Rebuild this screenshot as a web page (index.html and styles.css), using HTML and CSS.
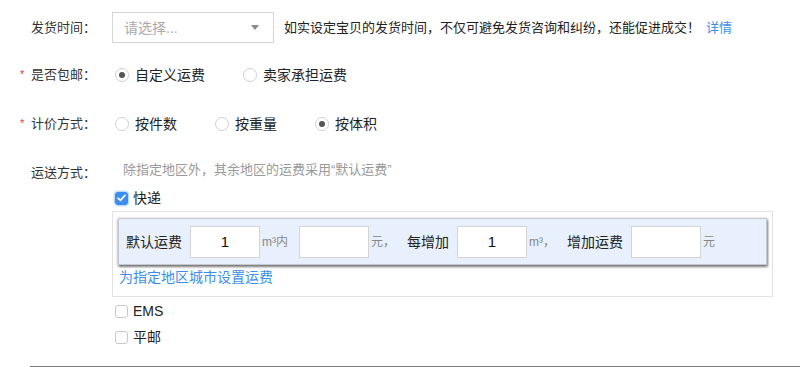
FILE: index.html
```html
<!DOCTYPE html>
<html lang="zh-CN">
<head>
<meta charset="utf-8">
<title>运费设置</title>
<link rel="stylesheet" href="styles.css">
</head>
<body>
<div class="form">
  <div class="row row-time">
    <div class="label">发货时间：</div>
    <div class="select"><span class="placeholder">请选择...</span><span class="caret"></span></div>
    <div class="desc">如实设定宝贝的发货时间，不仅可避免发货咨询和纠纷，还能促进成交！<a class="link detail">详情</a></div>
  </div>

  <div class="row row-free">
    <div class="label"><span class="star">*</span>是否包邮：</div>
    <div class="radios">
      <label class="radio-item"><span class="radio checked"></span>自定义运费</label>
      <label class="radio-item"><span class="radio"></span>卖家承担运费</label>
    </div>
  </div>

  <div class="row row-price">
    <div class="label"><span class="star">*</span>计价方式：</div>
    <div class="radios">
      <label class="radio-item"><span class="radio"></span>按件数</label>
      <label class="radio-item"><span class="radio"></span>按重量</label>
      <label class="radio-item"><span class="radio checked"></span>按体积</label>
    </div>
  </div>

  <div class="row row-ship">
    <div class="label label-top">运送方式：</div>
    <div class="ship">
      <div class="hint">除指定地区外，其余地区的运费采用“默认运费”</div>
      <label class="check-item"><span class="checkbox checked"><svg width="9" height="8" viewBox="0 0 9 8"><path d="M1 4.2 L3.4 6.4 L8 1.4" fill="none" stroke="#fff" stroke-width="1.6" stroke-linecap="round" stroke-linejoin="round"/></svg></span>快递</label>
      <div class="box">
        <div class="bar">
          <span class="bar-text">默认运费</span>
          <span class="input">1</span>
          <span class="unit unit-a">m³内</span>
          <span class="input"></span>
          <span class="unit unit-b">元，</span>
          <span class="bar-text">每增加</span>
          <span class="input">1</span>
          <span class="unit unit-c">m³，</span>
          <span class="bar-text">增加运费</span>
          <span class="input"></span>
          <span class="unit">元</span>
        </div>
        <a class="link area">为指定地区城市设置运费</a>
      </div>
      <label class="check-item ems"><span class="checkbox"></span>EMS</label>
      <label class="check-item post"><span class="checkbox"></span>平邮</label>
    </div>
  </div>
</div>
<div class="rule"></div>
</body>
</html>
```

FILE: styles.css
```css
html, body {
  margin: 0;
  padding: 0;
  background: #fff;
}
body {
  font-family: "Liberation Sans", "Noto Sans CJK SC", sans-serif;
  color: #333;
  width: 800px;
  height: 367px;
  overflow: hidden;
}
.form {
  padding-top: 12px;
}
.row {
  display: flex;
  align-items: center;
  height: 31px;
}
.row-free { margin-top: 16px; }
.row-price { margin-top: 18px; }
.row-ship {
  margin-top: 21px;
  height: auto;
  align-items: flex-start;
}
.label {
  width: 112px;
  box-sizing: border-box;
  padding-left: 31px;
  font-size: 13px;
  line-height: 20px;
  color: #333;
  display: flex;
  align-items: center;
  flex-shrink: 0;
}
.label-top { padding-top: 3px; }
.star {
  color: #e4393c;
  font-size: 11px;
  width: 11px;
  margin-left: -11px;
  line-height: 20px;
  position: relative;
  top: -1px;
}
.select {
  width: 162px;
  height: 31px;
  box-sizing: border-box;
  border: 1px solid #d6d6d6;
  display: flex;
  align-items: center;
  justify-content: space-between;
  padding: 0 14px 0 11px;
  flex-shrink: 0;
}
.placeholder {
  font-size: 14px;
  color: #aaa;
  line-height: 20px;
}
.caret {
  width: 0;
  height: 0;
  border-left: 4px solid transparent;
  border-right: 4px solid transparent;
  border-top: 5px solid #8a8a8a;
}
.desc {
  margin-left: 10px;
  font-size: 13px;
  line-height: 20px;
  white-space: nowrap;
  color: #222;
}
.link {
  color: #3d8ee8;
  cursor: pointer;
}
.detail { margin-left: 6px; }
.radios {
  display: flex;
  align-items: center;
  gap: 38px;
  padding-left: 3px;
}
.radio-item {
  display: flex;
  align-items: center;
  font-size: 14px;
  line-height: 20px;
  color: #222;
}
.radio {
  width: 14px;
  height: 14px;
  box-sizing: border-box;
  border: 1px solid #d0d0d0;
  border-radius: 50%;
  margin-right: 6px;
  display: flex;
  align-items: center;
  justify-content: center;
  background: #fff;
}
.radio.checked::after {
  content: "";
  width: 6px;
  height: 6px;
  border-radius: 50%;
  background: #555;
}
.ship {
  display: flex;
  flex-direction: column;
  align-items: flex-start;
}
.hint {
  font-size: 13px;
  line-height: 20px;
  color: #999;
  padding-left: 11px;
}
.check-item {
  display: flex;
  align-items: center;
  font-size: 14px;
  line-height: 20px;
  color: #222;
  padding-left: 3px;
  margin-top: 8px;
}
.checkbox {
  width: 13px;
  height: 13px;
  box-sizing: border-box;
  border: 1px solid #c8c8c8;
  border-radius: 3px;
  margin-right: 5px;
  background: #fff;
  display: flex;
  align-items: center;
  justify-content: center;
}
.checkbox.checked {
  background: #3b8ef0;
  border-color: #3b8ef0;
  box-shadow: 0 0 2px 1px rgba(59, 142, 240, 0.45);
}
.box {
  margin-top: 3px;
  width: 661px;
  box-sizing: border-box;
  border: 1px solid #e2e2e2;
  padding: 6px 5px 9px 5px;
}
.bar {
  display: flex;
  align-items: center;
  height: 47px;
  box-sizing: border-box;
  padding-left: 7px;
  background: #e7f0fc;
  border: 1px solid #c4c8cf;
  box-shadow: 0 1px 3px rgba(0, 0, 0, 0.4), 1px 2px 2px rgba(0, 0, 0, 0.35);
}
.bar-text {
  font-size: 14px;
  line-height: 20px;
  color: #222;
  margin-right: 8px;
}
.input {
  width: 70px;
  height: 32px;
  box-sizing: border-box;
  border: 1px solid #d4d4d4;
  background: #fff;
  display: flex;
  align-items: center;
  justify-content: center;
  font-size: 15px;
  color: #111;
  flex-shrink: 0;
}
.unit {
  font-size: 12px;
  color: #888;
  line-height: 20px;
  margin-left: 2px;
}
.unit-a { width: 37px; }
.unit-b { width: 36px; }
.unit-c { width: 38px; }
.area {
  display: block;
  font-size: 14px;
  line-height: 20px;
  margin-top: 2px;
  margin-left: 1px;
}
.ems { margin-top: 4px; }
.post { margin-top: 6px; }
.rule {
  margin-left: 30px;
  margin-top: 19px;
  border-top: 2px solid #7a7a7a;
}
```
